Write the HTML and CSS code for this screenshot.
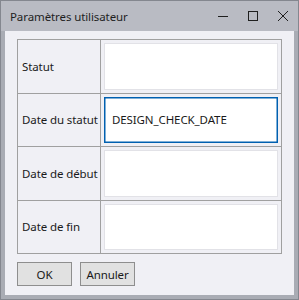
FILE: index.html
```html
<!DOCTYPE html>
<html lang="fr">
<head>
<meta charset="utf-8">
<title>Paramètres utilisateur</title>
<link rel="stylesheet" href="styles.css">
</head>
<body>
<div class="window">
  <div class="titlebar">
    <span class="title">Paramètres utilisateur</span>
    <div class="controls">
      <svg class="ctl" width="12" height="12" viewBox="0 0 12 12"><path d="M1 6.5h10" stroke="#1f1f1f" stroke-width="1"/></svg>
      <svg class="ctl" width="12" height="12" viewBox="0 0 12 12"><rect x="1.5" y="1.5" width="9" height="9" fill="none" stroke="#1f1f1f" stroke-width="1"/></svg>
      <svg class="ctl" width="12" height="12" viewBox="0 0 12 12"><path d="M1 1L11 11M11 1L1 11" stroke="#1f1f1f" stroke-width="1"/></svg>
    </div>
  </div>
  <div class="content">
    <div class="grid">
      <div class="label">Statut</div>
      <div class="field"><div class="input"></div></div>
      <div class="label">Date du statut</div>
      <div class="field"><div class="input focused">DESIGN_CHECK_DATE</div></div>
      <div class="label">Date de début</div>
      <div class="field"><div class="input"></div></div>
      <div class="label">Date de fin</div>
      <div class="field"><div class="input"></div></div>
    </div>
    <div class="buttons">
      <button class="btn">OK</button>
      <button class="btn">Annuler</button>
    </div>
  </div>
</div>
</body>
</html>
```
FILE: styles.css
```css
* { box-sizing: border-box; }
html, body { margin: 0; padding: 0; }
body {
  font-family: "Noto Sans", "Open Sans", sans-serif;
  font-size: 11.5px;
  letter-spacing: -0.1px;
  color: #1a1a1a;
  background: #ffffff;
}
.window {
  width: 299px;
  height: 300px;
  background: #a9acb4;
  border: 1px solid #84878f;
  display: flex;
  flex-direction: column;
}
.titlebar {
  height: 30px;
  background: #b9bbc3;
  display: flex;
  align-items: center;
  padding: 0 0 0 9px;
  flex: none;
}
.title {
  flex: 1;
  font-size: 11.5px;
  color: #1f1f1f;
}
.controls {
  display: flex;
  align-items: center;
  gap: 18px;
  padding-right: 9px;
}
.ctl { display: block; }
.content {
  flex: 1;
  margin: 0 4px 4px 4px;
  background: #f0f0f5;
  padding: 8px 12px 9px 12px;
  display: flex;
  flex-direction: column;
}
.grid {
  height: 215px;
  display: grid;
  grid-template-columns: 82px 1fr;
  grid-template-rows: repeat(4, 1fr);
  gap: 1px;
  padding: 1px;
  background: #a0a0a0;
}
.label {
  background: #f0f0f5;
  display: flex;
  align-items: center;
  padding-left: 4px;
  white-space: nowrap;
  overflow: hidden;
}
.field {
  background: #f0f0f5;
  padding: 3px;
  display: flex;
}
.input {
  flex: 1;
  background: #ffffff;
  border: 1px solid #e2e2e7;
  display: flex;
  align-items: center;
  padding-left: 7px;
}
.input.focused {
  border: 1px solid #0060b0;
  box-shadow: inset 0 0 0 0.5px #0060b0;
}
.buttons {
  margin-top: 8px;
  display: flex;
  gap: 8px;
}
.btn {
  width: 55px;
  height: 24px;
  background: #e1e1e1;
  border: 1px solid #8e8e8e;
  font-family: "Noto Sans", "Open Sans", sans-serif;
  font-size: 11.5px;
  letter-spacing: -0.1px;
  color: #1a1a1a;
  padding: 0;
}
```
